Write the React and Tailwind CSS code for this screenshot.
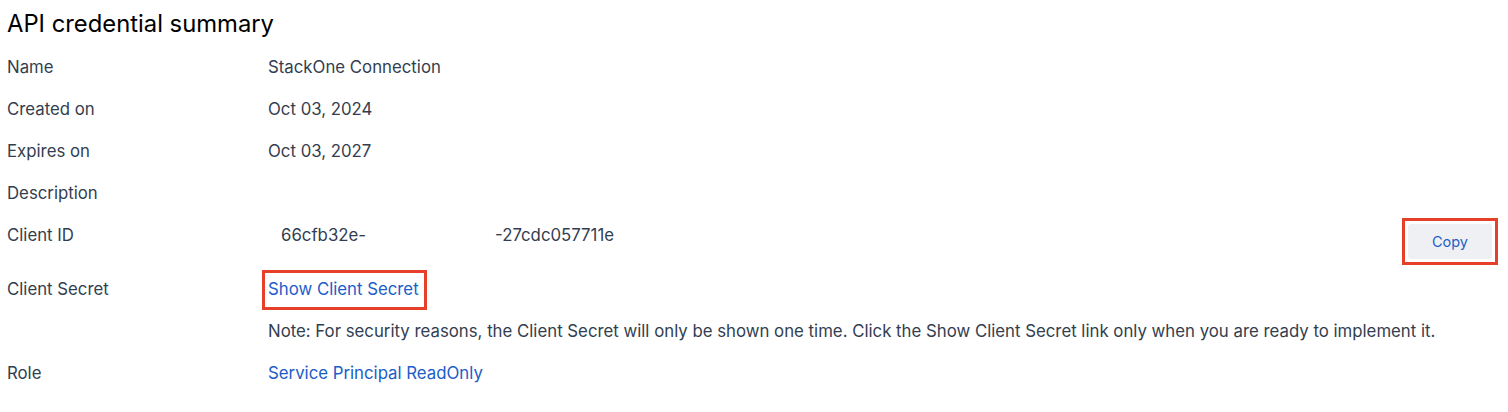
export default function App() {
  const rows = [
    { label: 'Name', value: 'StackOne Connection' },
    { label: 'Created on', value: 'Oct 03, 2024' },
    { label: 'Expires on', value: 'Oct 03, 2027' },
    { label: 'Description', value: '' },
  ]

  return (
    <div className="min-h-[412px] w-full bg-white pl-[7px] pr-[10px] pt-[2px] text-[16.8px] text-[#323e4f]" style={{ fontFamily: 'Inter, "Noto Sans", sans-serif' }}>
      <h1 className="flex h-[45px] items-center pb-[1px] text-[23.8px] font-normal text-black">API credential summary</h1>

      {rows.map((row) => (
        <div key={row.label} className="flex h-[42px] items-center">
          <div className="w-[261px] shrink-0">{row.label}</div>
          <div>{row.value}</div>
        </div>
      ))}

      {/* Client ID */}
      <div className="flex h-[54px] items-start">
        <div className="flex h-[42px] w-[261px] shrink-0 items-center">Client ID</div>
        <div className="flex h-[42px] flex-1 items-center pl-[13px]">
          <span className="w-[214px]">66cfb32e-</span>
          <span>-27cdc057711e</span>
        </div>
        <div className="mt-[3px] border-[3px] border-[#e6402a] p-[3px]">
          <button className="h-[35px] w-[84px] rounded-[3px] bg-[#eef0f3] text-[14.5px] text-[#1f5fc8]">Copy</button>
        </div>
      </div>

      {/* Client Secret */}
      <div className="flex h-[42px] items-center">
        <div className="w-[261px] shrink-0">Client Secret</div>
        <div className="-ml-[6px] -mt-[1px] flex h-[40px] items-center border-[3px] border-[#e6402a] pl-[3px] pr-[5px]">
          <a className="text-[#1b5dc9]">Show Client Secret</a>
        </div>
      </div>

      <div className="flex h-[42px] items-center">
        <div className="w-[261px] shrink-0"></div>
        <div>Note: For security reasons, the Client Secret will only be shown one time. Click the Show Client Secret link only when you are ready to implement it.</div>
      </div>

      <div className="flex h-[42px] items-center">
        <div className="w-[261px] shrink-0">Role</div>
        <a className="text-[#1b5dc9]">Service Principal ReadOnly</a>
      </div>
    </div>
  )
}
